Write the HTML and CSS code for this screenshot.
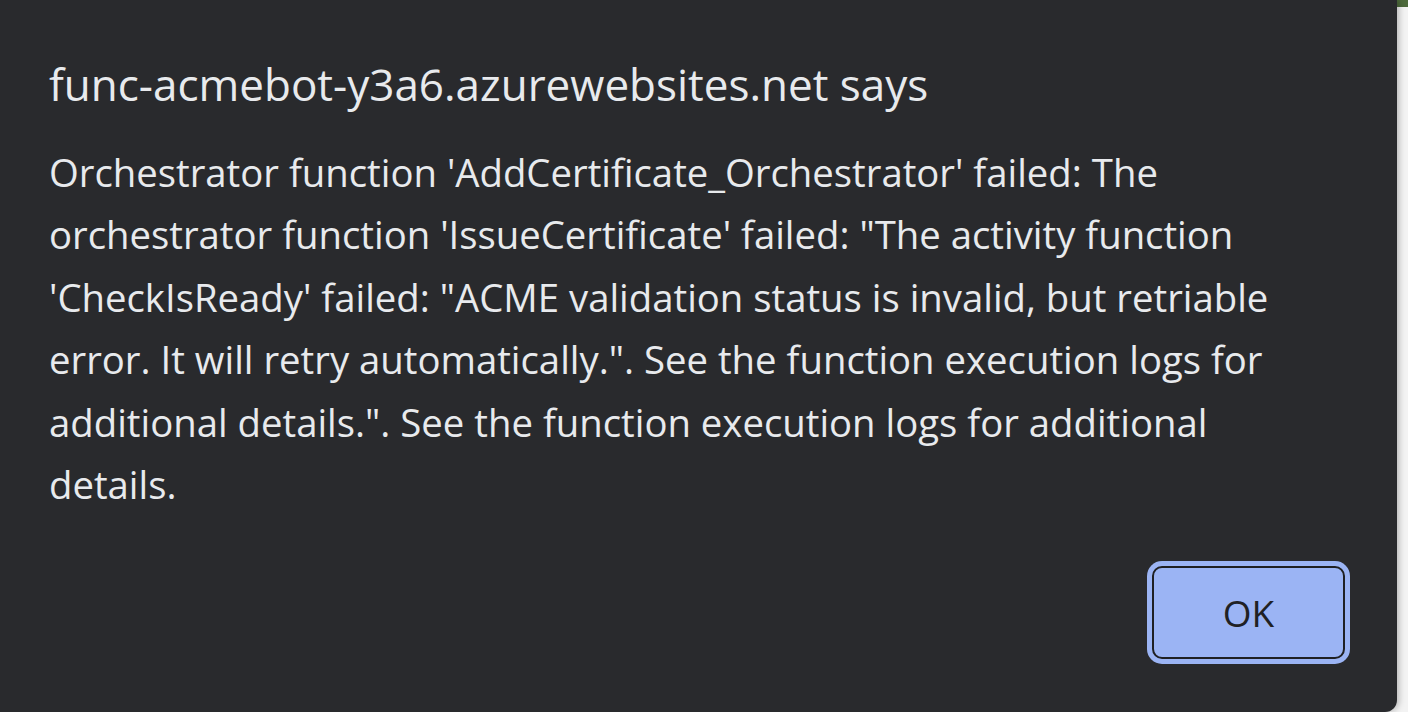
FILE: index.html
```html
<!DOCTYPE html>
<html>
<head>
<meta charset="utf-8">
<link rel="stylesheet" href="styles.css">
</head>
<body>
<div class="page">
  <div class="dialog">
    <div class="title">func-acmebot-y3a6.azurewebsites.net says</div>
    <div class="message">Orchestrator function 'AddCertificate_Orchestrator' failed: The<br>orchestrator function 'IssueCertificate' failed: "The activity function<br>'CheckIsReady' failed: "ACME validation status is invalid, but retriable<br>error. It will retry automatically.". See the function execution logs for<br>additional details.". See the function execution logs for additional<br>details.</div>
    <div class="actions">
      <button class="ok">OK</button>
    </div>
  </div>
</div>
</body>
</html>
```

FILE: styles.css
```css
html, body {
  margin: 0;
  padding: 0;
  width: 1408px;
  height: 712px;
  overflow: hidden;
}
body {
  background: linear-gradient(to bottom, #4d6a3c 0, #4d6a3c 7px, #f3f3f3 7px, #f3f3f3 100%);
  font-family: "Open Sans", "Noto Sans", sans-serif;
}
.page {
  display: flex;
  height: 712px;
}
.dialog {
  width: 1397px;
  height: 712px;
  box-sizing: border-box;
  background: #292a2d;
  border-bottom-right-radius: 12px;
  box-shadow: 2px 0 6px rgba(0,0,0,0.25);
  padding: 53px 48px 0 49px;
  color: #e8eaed;
  display: flex;
  flex-direction: column;
}
.title {
  font-size: 44px;
  line-height: 62px;
  white-space: nowrap;
}
.message {
  margin-top: 26px;
  font-size: 38.3px;
  line-height: 62.4px;
  white-space: nowrap;
}
.actions {
  display: flex;
  justify-content: flex-end;
  margin-top: 51px;
}
.ok {
  width: 193px;
  height: 93px;
  box-sizing: border-box;
  background: #9bb4f4;
  border: 2px solid #1f2023;
  border-radius: 10px;
  box-shadow: 0 0 0 5px #9bb4f4;
  color: #202124;
  font-family: "Open Sans", "Noto Sans", sans-serif;
  font-size: 37px;
  padding: 0;
  margin-right: 4px;
}
```
